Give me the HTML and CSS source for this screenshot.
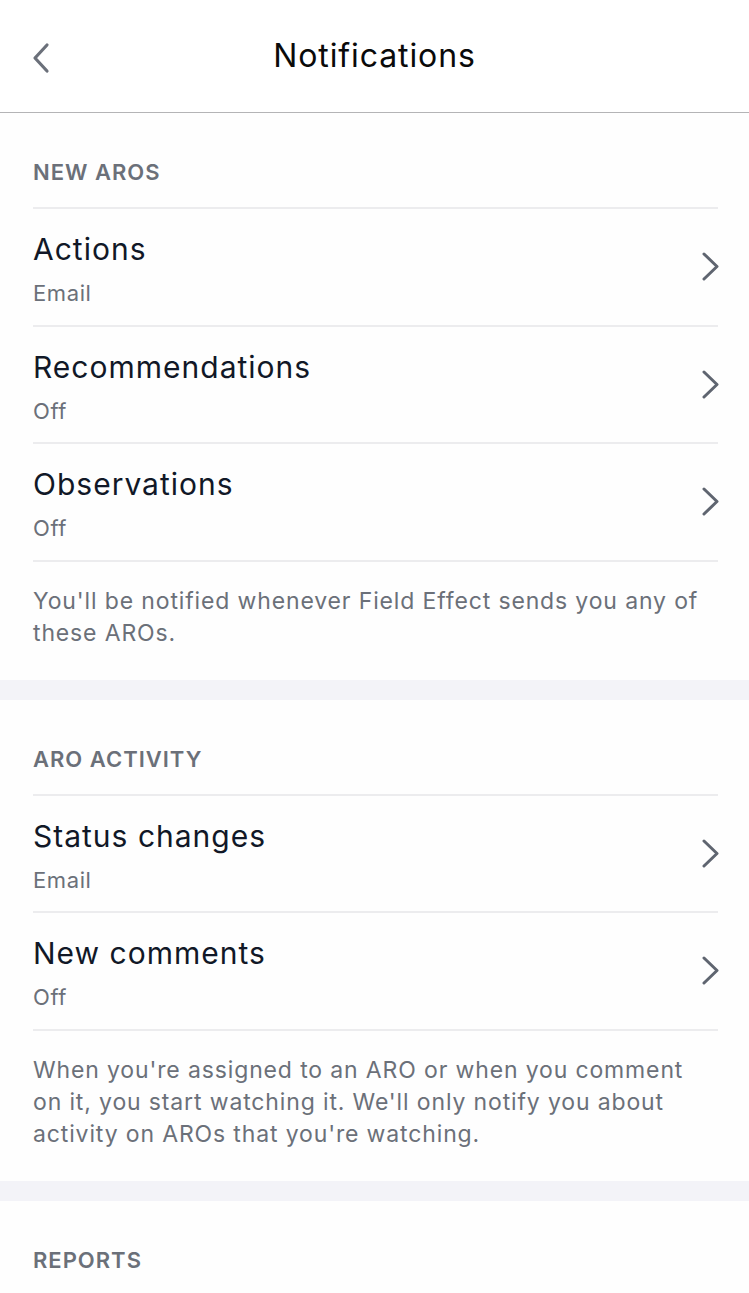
FILE: index.html
```html
<!DOCTYPE html>
<html lang="en">
<head>
    <meta charset="UTF-8">
    <meta name="viewport" content="width=device-width, initial-scale=1.0">
    <title>Notifications</title>
    <link rel="stylesheet" href="styles.css">
</head>
<body>

<header class="topbar">
    <a class="back" href="#">
        <svg width="19" height="32" viewBox="0 0 19 32"><path d="M16 3 L4 16 L16 29" fill="none" stroke="#6b707a" stroke-width="3.2" stroke-linecap="round" stroke-linejoin="round"/></svg>
    </a>
    <h1>Notifications</h1>
    <span></span>
</header>

<section class="group">
    <div class="group-label">NEW AROS</div>
    <a class="row" href="#">
        <div>
            <div class="row-title">Actions</div>
            <div class="row-value">Email</div>
        </div>
        <svg class="chev" width="17" height="29" viewBox="0 0 17 29"><path d="M2 2 L15 14.5 L2 27" fill="none" stroke="#5f6570" stroke-width="3" stroke-linecap="round" stroke-linejoin="round"/></svg>
    </a>
    <a class="row" href="#">
        <div>
            <div class="row-title">Recommendations</div>
            <div class="row-value">Off</div>
        </div>
        <svg class="chev" width="17" height="29" viewBox="0 0 17 29"><path d="M2 2 L15 14.5 L2 27" fill="none" stroke="#5f6570" stroke-width="3" stroke-linecap="round" stroke-linejoin="round"/></svg>
    </a>
    <a class="row" href="#">
        <div>
            <div class="row-title">Observations</div>
            <div class="row-value">Off</div>
        </div>
        <svg class="chev" width="17" height="29" viewBox="0 0 17 29"><path d="M2 2 L15 14.5 L2 27" fill="none" stroke="#5f6570" stroke-width="3" stroke-linecap="round" stroke-linejoin="round"/></svg>
    </a>
    <p class="note">You'll be notified whenever Field Effect sends you any of these AROs.</p>
</section>

<div class="band"></div>

<section class="group">
    <div class="group-label">ARO ACTIVITY</div>
    <a class="row" href="#">
        <div>
            <div class="row-title">Status changes</div>
            <div class="row-value">Email</div>
        </div>
        <svg class="chev" width="17" height="29" viewBox="0 0 17 29"><path d="M2 2 L15 14.5 L2 27" fill="none" stroke="#5f6570" stroke-width="3" stroke-linecap="round" stroke-linejoin="round"/></svg>
    </a>
    <a class="row" href="#">
        <div>
            <div class="row-title">New comments</div>
            <div class="row-value">Off</div>
        </div>
        <svg class="chev" width="17" height="29" viewBox="0 0 17 29"><path d="M2 2 L15 14.5 L2 27" fill="none" stroke="#5f6570" stroke-width="3" stroke-linecap="round" stroke-linejoin="round"/></svg>
    </a>
    <p class="note">When you're assigned to an ARO or when you comment on it, you start watching it. We'll only notify you about activity on AROs that you're watching.</p>
</section>

<div class="band"></div>

<section class="group">
    <div class="group-label">REPORTS</div>
</section>

</body>
</html>
```

FILE: styles.css
```css
body {
    margin: 0;
    font-family: Inter, 'Liberation Sans', sans-serif;
    background-color: #fefefe;
    color: #111827;
}
a {
    color: inherit;
    text-decoration: none;
}

/* barra superior */
.topbar {
    height: 112px;
    display: grid;
    grid-template-columns: 90px 1fr 90px;
    align-items: center;
    border-bottom: 1px solid #b4b4b6;
    background-color: #fff;
}
.back {
    display: flex;
    padding-left: 31px;
    padding-top: 4px;
}
.topbar h1 {
    margin: 0;
    text-align: center;
    font-size: 32px;
    font-weight: 400;
    letter-spacing: 0.9px;
    color: #0a0a0a;
    padding-bottom: 2px;
}

/* grupos */
.group {
    padding: 0 31px 0 33px;
}
.group-label {
    padding: 46px 0 22px;
    line-height: 26px;
    font-size: 22px;
    font-weight: 600;
    letter-spacing: 1px;
    color: #6b7079;
}
.row {
    display: flex;
    align-items: center;
    justify-content: space-between;
    height: 115.5px;
    border-top: 2px solid #ececee;
}
.row-title {
    font-size: 30px;
    line-height: 36px;
    margin-top: 5px;
    letter-spacing: 1px;
    color: #111827;
}
.row-value {
    font-size: 22px;
    line-height: 28px;
    margin-top: 12px;
    letter-spacing: 0.6px;
    color: #6b7079;
}
.chev {
    margin-right: -1px;
}
.note {
    margin: 0;
    border-top: 2px solid #ececee;
    padding: 23px 0 31px;
    font-size: 23px;
    line-height: 32px;
    letter-spacing: 0.86px;
    color: #6b7079;
}
.band {
    height: 20px;
    background-color: #f3f3f8;
}
```
